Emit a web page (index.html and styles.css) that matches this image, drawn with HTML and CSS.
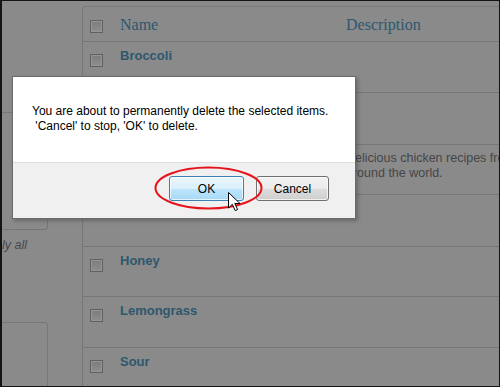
FILE: index.html
```html
<!DOCTYPE html>
<html lang="en">
<head>
    <meta charset="UTF-8">
    <title>Delete items</title>
    <link rel="stylesheet" href="styles.css">
</head>
<body>
    <div class="screen">
        <aside class="sidebar">
            <div class="side-box"></div>
            <p class="side-note">ly all</p>
            <div class="side-box side-box-low"></div>
        </aside>

        <div class="list">
            <div class="row head">
                <div class="check"><span class="box"></span></div>
                <div class="name">Name</div>
                <div class="desc">Description</div>
            </div>
            <div class="row">
                <div class="check"><span class="box"></span></div>
                <div class="name">Broccoli</div>
                <div class="desc"></div>
            </div>
            <div class="row tall">
                <div class="check"><span class="box"></span></div>
                <div class="name"></div>
                <div class="desc"></div>
            </div>
            <div class="row short">
                <div class="check"><span class="box"></span></div>
                <div class="name"></div>
                <div class="desc">Delicious chicken recipes from around the world.</div>
            </div>
            <div class="row tall">
                <div class="check"><span class="box box-up"></span></div>
                <div class="name"></div>
                <div class="desc"></div>
            </div>
            <div class="row short">
                <div class="check"><span class="box"></span></div>
                <div class="name">Honey</div>
                <div class="desc"></div>
            </div>
            <div class="row">
                <div class="check"><span class="box"></span></div>
                <div class="name">Lemongrass</div>
                <div class="desc"></div>
            </div>
            <div class="row">
                <div class="check"><span class="box"></span></div>
                <div class="name">Sour</div>
                <div class="desc"></div>
            </div>
        </div>

        <!-- confirm dialog over the page -->
        <div class="dialog">
            <div class="dialog-body">
                <p class="message">You are about to permanently delete the selected items.<br>&nbsp;'Cancel' to stop, 'OK' to delete.</p>
            </div>
            <div class="dialog-footer">
                <button class="btn btn-ok">OK</button>
                <button class="btn btn-cancel">Cancel</button>
            </div>
        </div>

        <svg class="circle-mark" width="118" height="50" viewBox="0 0 118 50">
            <ellipse cx="58.5" cy="25" rx="53" ry="20.5" fill="none" stroke="#e5141c" stroke-width="2"/>
        </svg>

        <svg class="pointer" width="14" height="20" viewBox="0 0 14 20">
            <path d="M0.5 0.5 V16 L4.3 12.3 L7.2 18.6 L9.6 17.5 L6.8 11.5 H12 Z" fill="#fff" stroke="#000" stroke-width="1" stroke-linejoin="round"/>
        </svg>
    </div>
</body>
</html>
```

FILE: styles.css
```css
* {
    margin: 0;
    padding: 0;
    box-sizing: border-box;
}

body {
    background: #fff;
    font-family: 'Liberation Sans', Arial, sans-serif;
}

.screen {
    position: relative;
    width: 500px;
    height: 387px;
    overflow: hidden;
    display: flex;
    border: 1px solid #141414;
    border-left-width: 2px;
    background-color: #8a8a8b;
    background-image: repeating-conic-gradient(#8d8d8e 0 25%, #878788 0 50%);
    background-size: 2px 2px;
}

/* left column, mostly hidden */
.sidebar {
    width: 80px;
    flex: none;
    display: flex;
    flex-direction: column;
}

.side-box {
    width: 46px;
    height: 118px;
    margin-top: 111px;
    border: 1px solid #777;
    border-left: none;
    border-radius: 0 0 4px 0;
}

.side-note {
    margin-top: 8px;
    font-size: 12.5px;
    line-height: 15px;
    font-style: italic;
    color: #474747;
}

.side-box-low {
    flex: 1;
    height: auto;
    margin-top: 69px;
    border-bottom: none;
    border-radius: 0 4px 0 0;
}

/* items table */
.list {
    flex: 1;
    margin-top: 5px;
    border-left: 1px solid #777;
    border-top: 1px solid #7b7b7b;
    border-radius: 4px 0 0 0;
}

.row {
    display: flex;
    height: 51px;
    padding-top: 6px;
    border-bottom: 1px solid #767676;
}

.row.tall {
    height: 52px;
}

.row.short {
    height: 50px;
}

.row.head {
    height: 35px;
    padding-top: 8px;
}

.check {
    width: 37px;
    flex: none;
    padding-left: 7px;
}

.box {
    display: block;
    width: 13px;
    height: 13px;
    margin-top: 6px;
    border: 1px solid #606060;
    background: linear-gradient(#7c7c7c, #8e8e8e);
    box-shadow: inset 0 0 0 1px #959595;
}

.head .box {
    margin-top: 5px;
}

.box.box-up {
    margin-top: 2px;
}

.name {
    width: 226px;
    flex: none;
    font-size: 13px;
    line-height: 16px;
    font-weight: bold;
    color: #2e576d;
}

.desc {
    width: 190px;
    flex: none;
    font-size: 12.5px;
    line-height: 15px;
    color: #464646;
}

.head .name,
.head .desc {
    font-family: 'Liberation Serif', Georgia, serif;
    font-size: 16px;
    line-height: 20px;
    font-weight: normal;
    color: #2d586f;
}

/* confirm dialog */
.dialog {
    position: absolute;
    left: 10px;
    top: 75px;
    width: 344px;
    height: 143px;
    display: flex;
    flex-direction: column;
    border: 1px solid #6a6a6a;
    box-shadow: 2px 2px 4px rgba(0, 0, 0, 0.25);
}

.dialog-body {
    height: 85px;
    flex: none;
    background: #fff;
    padding: 27px 0 0 19px;
}

.message {
    font-size: 12px;
    line-height: 15px;
    color: #000;
}

.dialog-footer {
    flex: 1;
    display: flex;
    justify-content: flex-end;
    align-items: flex-start;
    gap: 12px;
    padding: 13px 26px 0 0;
    background: #f0f0f0;
    border-top: 1px solid #dfdfdf;
}

.btn {
    height: 25px;
    font-family: 'Liberation Sans', Arial, sans-serif;
    font-size: 12px;
    color: #000;
    border-radius: 3px;
    box-shadow: inset 0 0 0 1px rgba(255, 255, 255, 0.7);
}

.btn-ok {
    width: 75px;
    border: 1px solid #3c7fb1;
    background: linear-gradient(#eaf6fd 0%, #d9f0fc 50%, #bee6fd 50%, #a7d9f5 100%);
}

.btn-cancel {
    width: 73px;
    border: 1px solid #707070;
    background: linear-gradient(#f2f2f2 0%, #ebebeb 50%, #dddddd 50%, #cfcfcf 100%);
}

/* annotation marks */
.circle-mark {
    position: absolute;
    left: 148px;
    top: 162px;
}

.pointer {
    position: absolute;
    left: 226px;
    top: 191px;
}
```
